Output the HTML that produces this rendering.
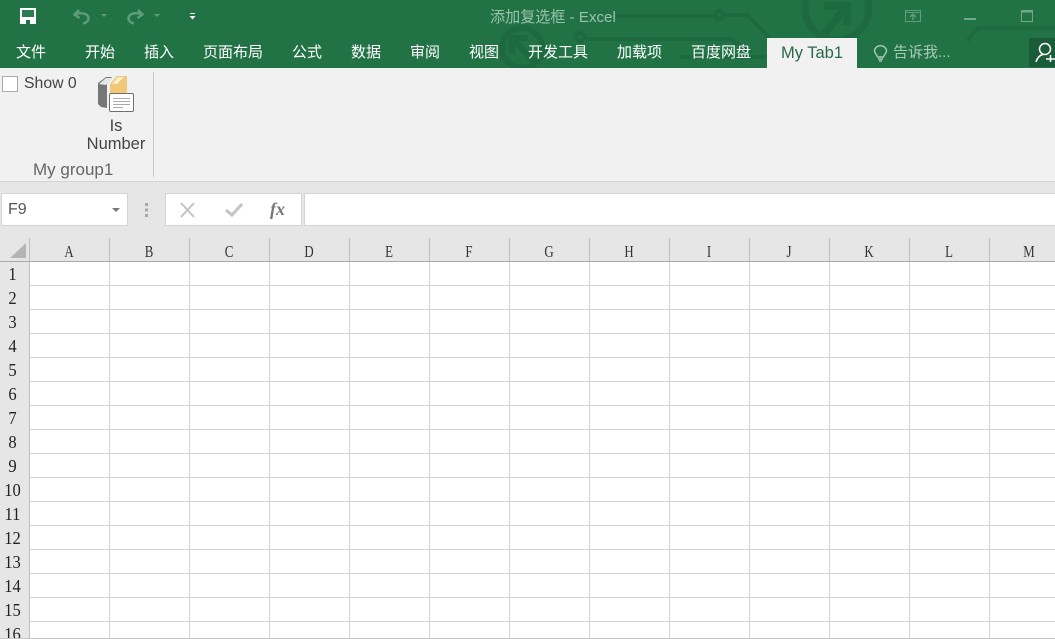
<!DOCTYPE html>
<html lang="zh"><head><meta charset="utf-8"><title>添加复选框 - Excel</title>
<style>
html,body{margin:0;padding:0;width:1055px;height:639px;overflow:hidden;background:#fff}
body{position:relative;font-family:"Liberation Sans","Noto Sans CJK SC",sans-serif}
div,span{position:absolute;white-space:nowrap}
svg{position:absolute;overflow:visible}
.t{top:44px;height:18px;line-height:18px;font-size:15px;color:#fff;letter-spacing:0}
.h{top:243px;width:80px;text-align:center;font:16.5px/18px "Liberation Serif",serif;color:#333;transform:scaleX(.78)}
.r{left:0;width:25px;text-align:center;font:18px/20px "Liberation Serif",serif;color:#222;transform:scaleX(.92)}
</style></head><body>
<div style="left:0;top:0;width:1055px;height:68px;background:#217346"></div>
<svg style="left:0;top:0" width="1055" height="68" viewBox="0 0 1055 68" fill="none" stroke="#1e6a40" stroke-width="4">
<path d="M616 16H714M724 15H747L770 38M586 39H730L752 52M680 57H765M967 41L978 28H1055"/>
<circle cx="719" cy="15" r="4"/><circle cx="580" cy="37" r="4"/>
<circle cx="837" cy="8" r="32" stroke-width="7"/>
<path d="M823 36L845 8M824 6H847V25" stroke-width="8"/>
<circle cx="522" cy="48" r="20" stroke-width="6"/><path d="M512 38L535 62M512 54V38H528" stroke-width="6"/>
</svg>
<svg style="left:20px;top:8px" width="16" height="16" viewBox="0 0 16 16"><path d="M0 0H16V16H0Z" fill="#fff"/><path d="M2 2H14V9H2Z" fill="#2c7a50"/><path d="M6 12H10V16H6Z" fill="#217346"/></svg>
<svg style="left:72px;top:9px" width="20" height="16" viewBox="0 0 20 16" fill="none" stroke="#5f9c7c" stroke-width="2.400"><path d="M7 1L2.500 5.500L7.500 9M3 5.500C8 3 16 4 16.500 9C16.700 12 14 14 11 14.500"/></svg>
<svg style="left:126px;top:9px" width="20" height="16" viewBox="0 0 20 16" fill="none" stroke="#5f9c7c" stroke-width="2.400"><path d="M12 1L16.500 5.500L11.500 9M16 5.500C11 3 3 4 2.500 9C2.300 12 5 14 8 14.500"/></svg>
<svg style="left:101px;top:14px" width="7" height="4"><path d="M0 0H6L3 3Z" fill="#5f9c7c"/></svg>
<svg style="left:154px;top:14px" width="7" height="4"><path d="M0 0H6L3 3Z" fill="#5f9c7c"/></svg>
<svg style="left:189px;top:12px" width="7" height="9"><path d="M1 1.500H6" stroke="#fff" stroke-width="1"/><path d="M0.500 4H6.500L3.500 7.500Z" fill="#fff"/></svg>
<div style="left:490px;top:9px;font-size:15.100px;line-height:18px;color:#9bc2ad">添加复选框 - Excel</div>
<svg style="left:905px;top:10px" width="16" height="12" fill="none" stroke="#5f9c7c"><path d="M.5.500H15.500V11.500H.5ZM1 2.500H15" /><path d="M8 10V5M5 7L8 4L11 7" stroke-width="1.500"/></svg>
<div style="left:964px;top:18px;width:12px;height:1.500px;background:#6fa88a"></div>
<svg style="left:1021px;top:10px" width="12" height="12" fill="none" stroke="#6fa88a"><path d="M.5.500H11.500V11.500H.5Z"/><path d="M0 1.500H12" stroke-width="2"/></svg>

<div class="t" style="left:16px">文件</div>
<div class="t" style="left:85px">开始</div>
<div class="t" style="left:144px">插入</div>
<div class="t" style="left:203px">页面布局</div>
<div class="t" style="left:292px">公式</div>
<div class="t" style="left:351px">数据</div>
<div class="t" style="left:410px">审阅</div>
<div class="t" style="left:469px">视图</div>
<div class="t" style="left:528px">开发工具</div>
<div class="t" style="left:617px">加载项</div>
<div class="t" style="left:691px">百度网盘</div>
<div style="left:767px;top:38px;width:90px;height:30px;background:#f1f1f1"></div>
<div class="t" style="left:767px;width:90px;text-align:center;color:#28694a;font-size:16.500px">My Tab1</div>
<svg style="left:873px;top:45px" width="15" height="18" viewBox="0 0 15 18" fill="none" stroke="#a9c9b8" stroke-width="1.400"><path d="M4.500 12C4 9.500 1.500 8.500 1.500 6A6 5.300 0 0 1 13.500 6C13.500 8.500 11 9.500 10.500 12ZM5 14H10M6 16H9"/></svg>
<div class="t" style="left:893px;color:#a9c9b8">告诉我...</div>
<div style="left:1029px;top:38px;width:26px;height:29px;background:#1a5c38"></div>
<svg style="left:1035px;top:42px" width="20" height="22" fill="none" stroke="#fff" stroke-width="1.500"><circle cx="10" cy="7" r="5.500"/><path d="M1 20C2 16 5 13 8 12.500M11 17H20M15.500 13V20"/></svg>

<div style="left:0;top:68px;width:1055px;height:113px;background:#f1f1f1"></div>
<div style="left:0;top:181px;width:1055px;height:1px;background:#d4d4d4"></div>
<div style="left:2px;top:76px;width:14px;height:14px;background:#fff;border:1px solid #ababab"></div>
<div style="left:24px;top:74px;font-size:15.800px;line-height:20px;color:#444">Show 0</div>
<svg style="left:97px;top:75px" width="38" height="38" viewBox="0 0 38 38">
<path d="M13 9L20 1H30V18H13Z" fill="#f0c878"/><path d="M15 9L21 2H27L20 9Z" fill="#fbeecb"/>
<path d="M1 8L9 2H15L10 9V33L4 32L1 29Z" fill="#777"/><path d="M2 9L9 3H15L9 10Z" fill="#e8e8e8"/>
<rect x="12.500" y="18.500" width="24" height="18" rx="1.500" fill="#fff" stroke="#6f6f6f"/>
<path d="M16 23.500H33M16 26.500H33M16 29.500H33M16 32.500H26" stroke="#aaa"/>
</svg>
<div style="left:86px;top:117px;width:60px;text-align:center;font-size:16.500px;line-height:18px;color:#444">Is<br>Number</div>
<div style="left:33px;top:160px;font-size:17px;line-height:20px;color:#666">My group1</div>
<div style="left:153px;top:72px;width:1px;height:105px;background:#c6c6c6"></div>

<div style="left:0;top:182px;width:1055px;height:79px;background:#e6e6e6"></div>
<div style="left:1px;top:193px;width:125px;height:31px;background:#fff;border:1px solid #d4d4d4"></div>
<div style="left:8px;top:200px;font-size:16px;line-height:20px;color:#555">F9</div>
<svg style="left:112px;top:208px" width="9" height="5"><path d="M0 0H8L4 4Z" fill="#777"/></svg>
<svg style="left:144px;top:203px" width="5" height="14"><path d="M1 0h3v3H1zM1 5.500h3v3H1zM1 11h3v3H1z" fill="#aaa"/></svg>
<div style="left:165px;top:193px;width:135px;height:31px;background:#fff;border:1px solid #d4d4d4"></div>
<svg style="left:180px;top:203px" width="15" height="14" fill="none" stroke="#c4c4c4" stroke-width="2"><path d="M1 0L14 14M14 0L1 14"/></svg>
<svg style="left:225px;top:203px" width="18" height="14" fill="none" stroke="#c4c4c4" stroke-width="3"><path d="M1 7L7 12L17 1"/></svg>
<div style="left:270px;top:198px;font:italic bold 18px/22px 'Liberation Serif',serif;color:#777">fx</div>
<div style="left:304px;top:193px;width:751px;height:31px;background:#fff;border:1px solid #d4d4d4;border-right:0"></div>

<div style="left:0;top:261px;width:29px;height:378px;background:#e6e6e6"></div>
<div style="left:30px;top:262px;width:1025px;height:377px;background-color:#fff;background-image:repeating-linear-gradient(90deg,transparent 0 79px,#d4d4d4 79px 80px),repeating-linear-gradient(180deg,transparent 0 23px,#d4d4d4 23px 24px)"></div>
<div style="left:0;top:261px;width:1055px;height:1px;background:#a9a9a9"></div>
<div style="left:29px;top:238px;width:1px;height:401px;background:#bdbdbd"></div>
<div style="left:109px;top:238px;width:946px;height:23px;background-image:repeating-linear-gradient(90deg,#bdbdbd 0 1px,transparent 1px 80px)"></div>
<div style="left:0;top:638px;width:1055px;height:1px;background:#c4c4c4"></div>
<svg style="left:10px;top:243px" width="17" height="16"><path d="M16 0V15H0Z" fill="#b4b4b4"/></svg>

<div class="h" style="left:29px">A</div><div class="h" style="left:109px">B</div><div class="h" style="left:189px">C</div><div class="h" style="left:269px">D</div><div class="h" style="left:349px">E</div><div class="h" style="left:429px">F</div><div class="h" style="left:509px">G</div><div class="h" style="left:589px">H</div><div class="h" style="left:669px">I</div><div class="h" style="left:749px">J</div><div class="h" style="left:829px">K</div><div class="h" style="left:909px">L</div><div class="h" style="left:989px">M</div>

<div class="r" style="top:264px;">1</div><div class="r" style="top:288px">2</div><div class="r" style="top:312px">3</div><div class="r" style="top:336px">4</div><div class="r" style="top:360px">5</div><div class="r" style="top:384px">6</div><div class="r" style="top:408px">7</div><div class="r" style="top:432px">8</div><div class="r" style="top:456px">9</div><div class="r" style="top:480px">10</div><div class="r" style="top:504px">11</div><div class="r" style="top:528px">12</div><div class="r" style="top:552px">13</div><div class="r" style="top:576px">14</div><div class="r" style="top:600px">15</div>
<div class="r" style="top:624px;height:14px;overflow:hidden">16</div>
</body></html>
